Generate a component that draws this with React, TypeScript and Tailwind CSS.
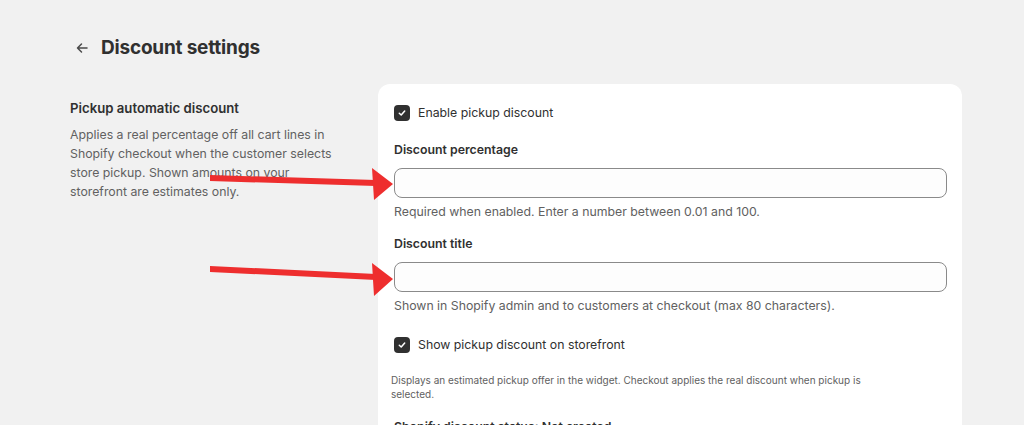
import React from 'react';

function Checkbox({ label }: { label: string }) {
  return (
    <label className="flex items-center gap-2 h-4">
      <span className="flex items-center justify-center w-4 h-4 rounded-[4px] bg-[#303030]">
        <svg width="10" height="10" viewBox="0 0 10 10" fill="none">
          <path d="M2.3 5.2 L4.2 7 L7.7 3" stroke="#fff" strokeWidth="1.5" strokeLinecap="round" strokeLinejoin="round" />
        </svg>
      </span>
      <span className="text-[12.3px] text-[#303030]">{label}</span>
    </label>
  );
}

function Field({ label, help }: { label: string; help: string }) {
  return (
    <div className="flex flex-col">
      <div className="text-[12.3px] leading-5 font-semibold text-[#303030]">{label}</div>
      <div className="mt-2 h-[30px] rounded-lg border border-[#8a8a8a] bg-[#fdfdfd]" />
      <div className="mt-1 text-[12.3px] leading-5 text-[#616161]">{help}</div>
    </div>
  );
}

export default function App() {
  return (
    <div className="relative w-[1024px] h-[425px] overflow-hidden bg-[#f1f1f1] font-['Inter',sans-serif]">
      <div className="pl-[70px] pr-[62px] pt-9">
        <div className="flex items-center gap-3 h-6">
          <svg width="14" height="14" viewBox="0 0 14 14" fill="none" className="ml-[5px]">
            <path d="M12 7 H2.5 M6.5 3 L2.5 7 L6.5 11" stroke="#4a4a4a" strokeWidth="1.5" strokeLinecap="round" strokeLinejoin="round" />
          </svg>
          <h1 className="text-[19px] font-bold text-[#303030] tracking-[-0.2px]">Discount settings</h1>
        </div>

        <div className="flex mt-6">
          <div className="w-[276px] pt-[14px]">
            <h2 className="text-[13.2px] leading-5 font-semibold text-[#303030]">Pickup automatic discount</h2>
            <p className="mt-[7px] text-[12.3px] leading-[19px] text-[#616161]">
              Applies a real percentage off all cart lines in Shopify checkout when the customer selects store pickup. Shown amounts on your storefront are estimates only.
            </p>
          </div>

          <div className="ml-8 flex-1 rounded-xl bg-white shadow-[0_1px_0_rgba(26,26,26,0.07)] pt-[21px] pl-4 pr-[15px] pb-4">
            <Checkbox label="Enable pickup discount" />
            <div className="mt-[19px]">
              <Field label="Discount percentage" help="Required when enabled. Enter a number between 0.01 and 100." />
            </div>
            <div className="mt-3">
              <Field label="Discount title" help="Shown in Shopify admin and to customers at checkout (max 80 characters)." />
            </div>
            <div className="mt-[21px]">
              <Checkbox label="Show pickup discount on storefront" />
            </div>
            <p className="mt-[20px] -ml-[3px] w-[475px] text-[10px] leading-[14px] text-[#616161]">
              Displays an estimated pickup offer in the widget. Checkout applies the real discount when pickup is selected.
            </p>
            <div className="mt-[16px] text-[12.3px] leading-5 font-semibold text-[#303030]">
              Shopify discount status: Not created
            </div>
          </div>
        </div>
      </div>

      <svg className="absolute inset-0 pointer-events-none" width="1024" height="425" viewBox="0 0 1024 425">
        <g fill="#ee2e2e">
          <polygon points="210,175 376,180 376,186 210,181" />
          <polygon points="372,168 393,184 374,200" />
          <polygon points="210,266 376,274 376,280 210,272" />
          <polygon points="372,263 393,279 374,296" />
        </g>
      </svg>
    </div>
  );
}
